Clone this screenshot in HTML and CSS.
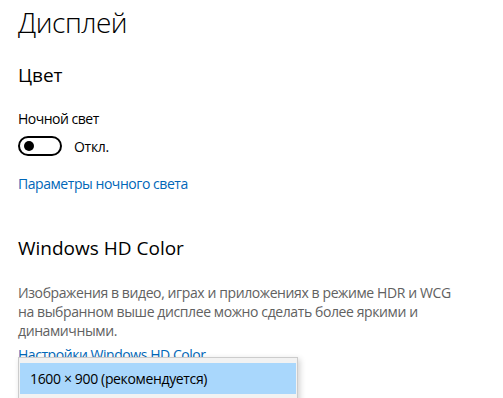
FILE: index.html
```html
<!DOCTYPE html>
<html lang="ru">
<head>
  <meta charset="UTF-8">
  <meta name="viewport" content="width=device-width, initial-scale=1.0">
  <title>Дисплей</title>
  <link rel="stylesheet" href="styles.css">
</head>
<body>
  <main class="page">
    <h1 class="page-title">Дисплей</h1>

    <section class="group">
      <h2 class="group-title">Цвет</h2>
      <div class="setting-label">Ночной свет</div>
      <div class="toggle-row">
        <span class="toggle"><span class="toggle-knob"></span></span>
        <span class="toggle-state">Откл.</span>
      </div>
      <a class="link" href="#">Параметры ночного света</a>
    </section>

    <section class="group group-hd">
      <h2 class="group-title">Windows HD Color</h2>
      <p class="desc">Изображения в видео, играх и приложениях в режиме HDR и WCG<br>на выбранном выше дисплее можно сделать более яркими и<br>динамичными.</p>
      <a class="link" href="#">Настройки Windows HD Color</a>
    </section>
  </main>

  <div class="dropdown">
    <div class="dropdown-item selected">1600 × 900 (рекомендуется)</div>
  </div>
</body>
</html>
```

FILE: styles.css
```css
body {
  margin: 0;
  font-family: "Open Sans", "Noto Sans", sans-serif;
  background: #fff;
  color: #000;
  overflow: hidden;
}
.page {
  padding: 0 0 0 18px;
}
.page-title {
  margin: 0;
  padding-top: 2px;
  font-size: 28px;
  font-weight: 300;
  line-height: 40px;
  letter-spacing: -0.5px;
}
.group {
  display: flex;
  flex-direction: column;
  align-items: flex-start;
}
.group-title {
  margin: 19px 0 0;
  font-size: 19px;
  font-weight: 400;
  line-height: 28px;
}
.setting-label {
  margin-top: 20px;
  font-size: 14px;
  line-height: 20px;
  letter-spacing: -0.5px;
}
.toggle-row {
  display: flex;
  align-items: center;
  gap: 12px;
  margin-top: 7px;
}
.toggle {
  display: flex;
  align-items: center;
  width: 40px;
  height: 16px;
  border: 2px solid #000;
  border-radius: 10px;
}
.toggle-knob {
  width: 10px;
  height: 10px;
  margin-left: 4px;
  border-radius: 50%;
  background: #000;
}
.toggle-state {
  font-size: 14px;
  letter-spacing: -0.3px;
}
.link {
  margin-top: 18px;
  font-size: 14px;
  line-height: 20px;
  letter-spacing: -0.45px;
  color: #0067b8;
  text-decoration: none;
}
.group-hd .group-title {
  margin-top: 40px;
}
.desc {
  margin: 21px 0 0;
  font-size: 14px;
  line-height: 19px;
  letter-spacing: -0.4px;
  color: #616161;
}
.group-hd .link {
  margin-top: 5px;
}
.dropdown {
  position: absolute;
  left: 18px;
  top: 357px;
  width: 276px;
  height: 60px;
  padding: 5px 1px 0;
  background: #f2f2f2;
  border: 1px solid #cccccc;
  box-shadow: 2px 2px 6px rgba(0, 0, 0, 0.18);
}
.dropdown-item {
  padding: 0 10px;
  font-size: 14px;
  line-height: 31px;
  letter-spacing: -0.35px;
  color: #000;
}
.dropdown-item.selected {
  background: #a9d7fc;
}
```
